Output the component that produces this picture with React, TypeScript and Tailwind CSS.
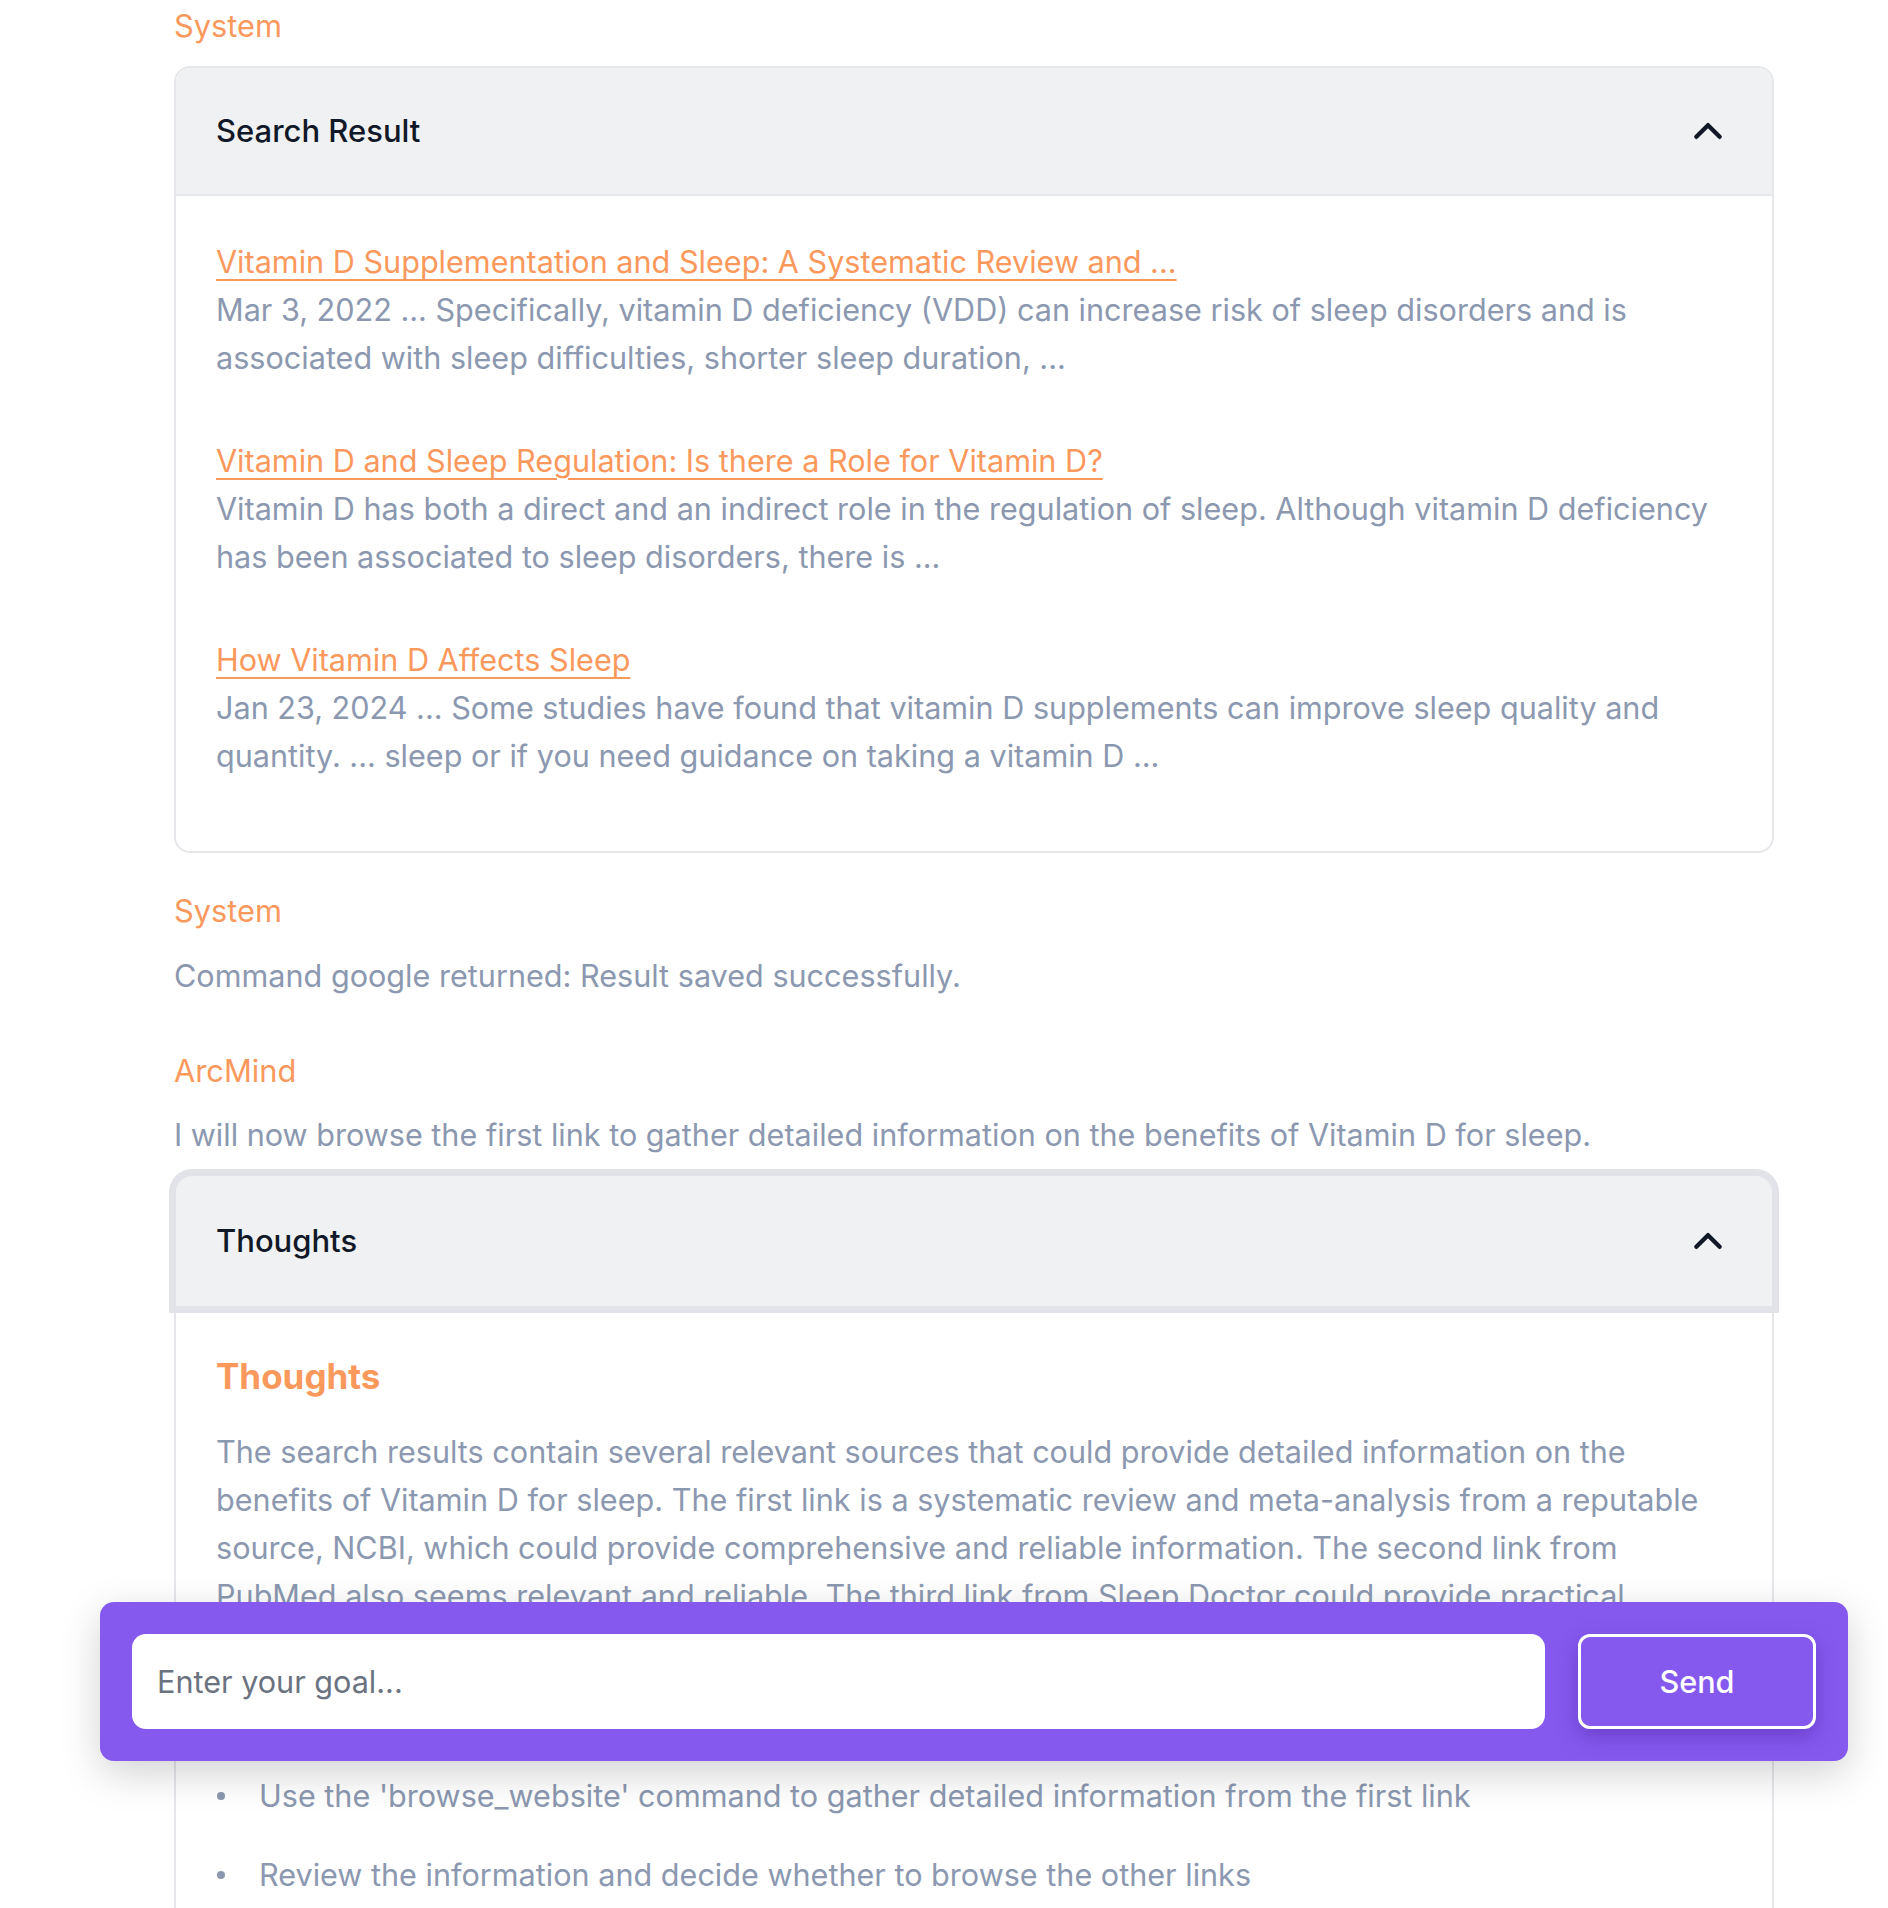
import { ReactNode } from "react";

const results = [
  {
    title: "Vitamin D Supplementation and Sleep: A Systematic Review and ...",
    desc: "Mar 3, 2022 ... Specifically, vitamin D deficiency (VDD) can increase risk of sleep disorders and is associated with sleep difficulties, shorter sleep duration, ...",
  },
  {
    title: "Vitamin D and Sleep Regulation: Is there a Role for Vitamin D?",
    desc: "Vitamin D has both a direct and an indirect role in the regulation of sleep. Although vitamin D deficiency has been associated to sleep disorders, there is ...",
  },
  {
    title: "How Vitamin D Affects Sleep",
    desc: "Jan 23, 2024 ... Some studies have found that vitamin D supplements can improve sleep quality and quantity. ... sleep or if you need guidance on taking a vitamin D ...",
  },
];

const plan = [
  "Use the 'browse_website' command to gather detailed information from the first link",
  "Review the information and decide whether to browse the other links",
];

const ChevronUp = () => (
  <svg width="40" height="40" viewBox="0 0 24 24" fill="none" stroke="#111827" strokeWidth="2.6" strokeLinecap="round" strokeLinejoin="round">
    <path d="M5 15.5l7-7 7 7" />
  </svg>
);

const Label = ({ children, className = "" }: { children: ReactNode; className?: string }) => (
  <p className={"text-[30.8px] leading-[48px] text-[#fb985c] " + className}>{children}</p>
);

export default function App() {
  return (
    <div className="relative h-[1908px] overflow-hidden bg-white font-['Inter',sans-serif]">
      <div className="ml-[174px] w-[1600px] pt-[2px]">
        <Label>System</Label>

        {/* search result card */}
        <div className="mt-[16px] rounded-[16px] border-2 border-[#e6e7eb]">
          <div className="flex h-[128px] items-center justify-between rounded-t-[14px] border-b-2 border-[#e6e7eb] bg-[#f0f1f3] pl-[40px] pr-[44px]">
            <span className="text-[31px] font-medium text-[#111827]">Search Result</span>
            <ChevronUp />
          </div>
          <div className="px-[40px] pt-[42px] pb-[16px]">
            {results.map((r) => (
              <div key={r.title} className="mb-[55px]">
                <a className="text-[30.6px] leading-[48px] text-[#fb985c] underline underline-offset-[6px] decoration-2">
                  {r.title}
                </a>
                <p className="text-[30.6px] leading-[48px] text-[#8b98b0]">{r.desc}</p>
              </div>
            ))}
          </div>
        </div>

        <Label className="mt-[34px]">System</Label>
        <p className="mt-[17px] text-[30.6px] leading-[48px] text-[#8b98b0]">
          Command google returned: Result saved successfully.
        </p>

        <Label className="mt-[47px]">ArcMind</Label>
        <p className="mt-[16px] text-[30.6px] leading-[48px] text-[#8b98b0]">
          I will now browse the first link to gather detailed information on the benefits of Vitamin D for sleep.
        </p>

        {/* thoughts card */}
        <div className="mt-[17px] rounded-t-[16px] border-x-2 border-[#e6e7eb]">
          <div className="flex h-[130px] items-center justify-between rounded-t-[16px] bg-[#f0f1f3] pl-[40px] pr-[44px] ring-[7px] ring-[#e2e3e8]">
            <span className="text-[31px] font-medium text-[#111827]">Thoughts</span>
            <ChevronUp />
          </div>
          <div className="px-[40px] pt-[46px] pb-[80px]">
            <h3 className="text-[35px] font-bold leading-[48px] text-[#fb985c]">Thoughts</h3>
            <p className="mt-[28px] text-[30.6px] leading-[48px] text-[#8b98b0]">
              The search results contain several relevant sources that could provide detailed information on the benefits of Vitamin D for sleep. The first link is a systematic review and meta-analysis from a reputable source, NCBI, which could provide comprehensive and reliable information. The second link from PubMed also seems relevant and reliable. The third link from Sleep Doctor could provide practical information.
            </p>
            <h3 className="mt-[28px] text-[35px] font-bold leading-[48px] text-[#fb985c]">Plan</h3>
            <ul className="mt-[28px] text-[30.6px] leading-[48px] text-[#8b98b0]">
              {plan.map((p) => (
                <li key={p} className="mb-[31px] flex items-center">
                  <span className="ml-[1px] mr-[34px] h-[8px] w-[8px] shrink-0 rounded-full bg-[#8b98b0]" />
                  <span>{p}</span>
                </li>
              ))}
            </ul>
          </div>
        </div>
      </div>

      {/* goal input bar */}
      <div className="absolute left-[100px] top-[1602px] flex w-[1748px] gap-[33px] rounded-[14px] bg-[#8559ee] p-[32px] shadow-[0_12px_40px_rgba(0,0,0,0.18)]">
        <input
          className="h-[95px] flex-1 rounded-[14px] bg-white px-[25px] text-[30.6px] text-[#111827] outline-none placeholder:text-[#6b7280]"
          placeholder="Enter your goal..."
        />
        <button className="h-[95px] w-[238px] rounded-[12px] border-[3px] border-white text-[30.6px] font-medium text-white shadow-[0_8px_20px_rgba(60,20,140,0.35)]">
          Send
        </button>
      </div>
    </div>
  );
}
